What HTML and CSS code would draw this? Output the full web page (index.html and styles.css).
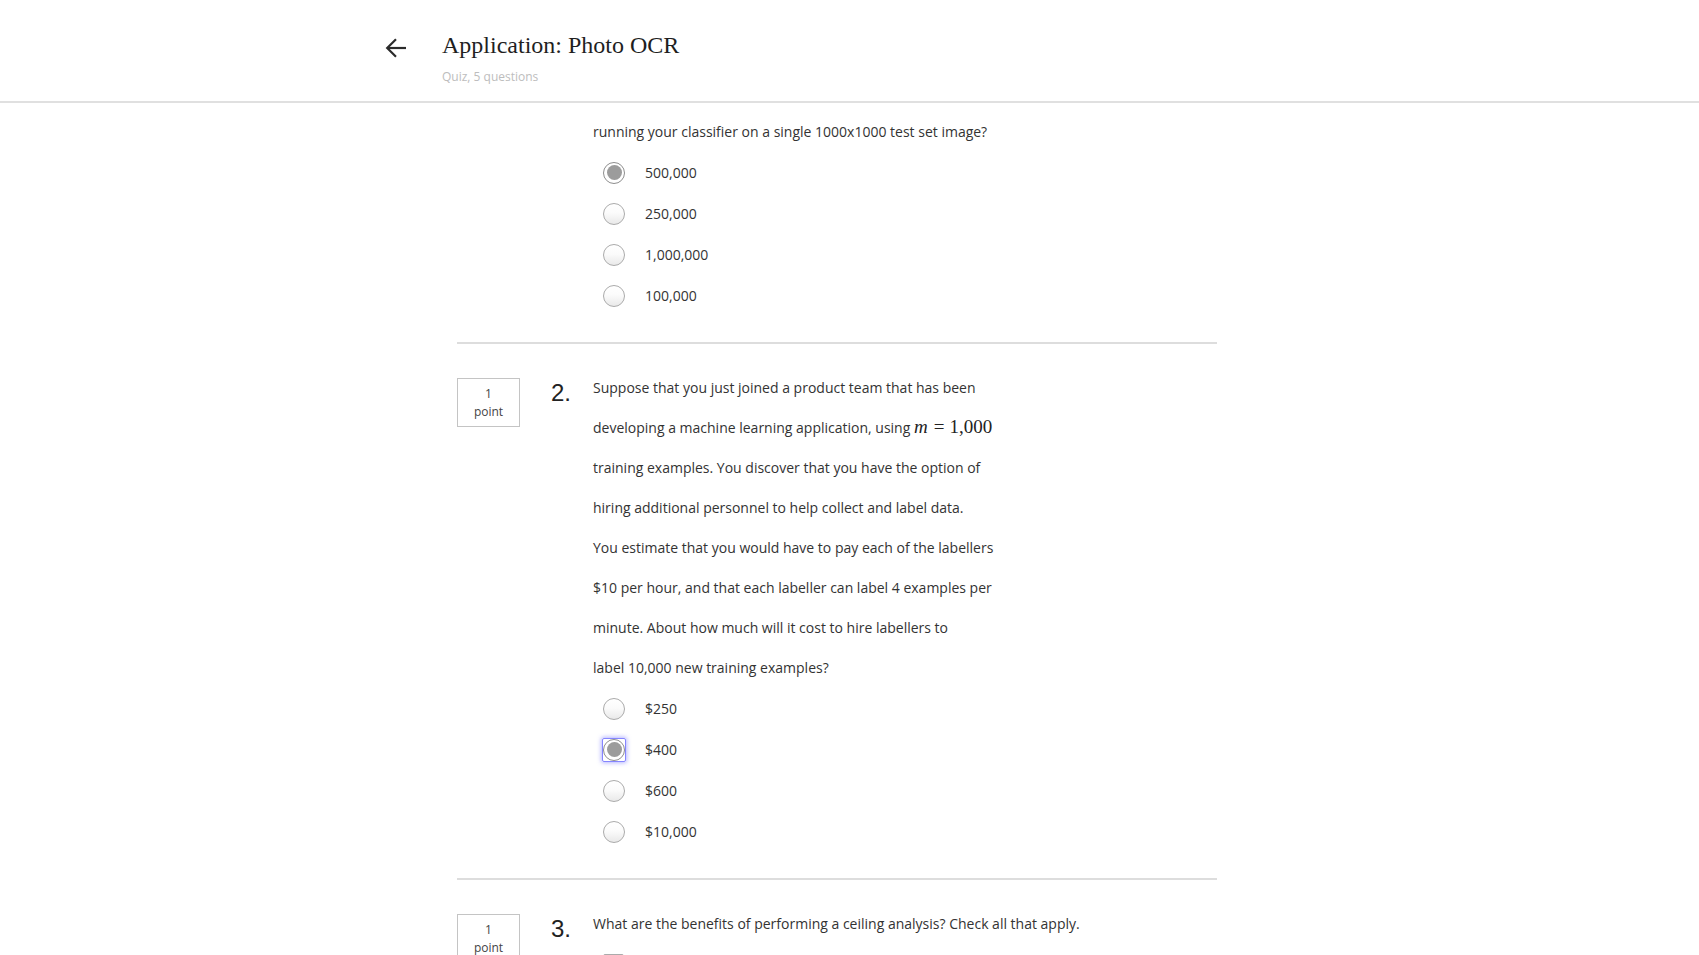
FILE: index.html
```html
<!DOCTYPE html>
<html lang="en">
<head>
<meta charset="utf-8">
<title>Application: Photo OCR</title>
<link rel="stylesheet" href="styles.css">
</head>
<body>
<header class="topbar">
  <div class="topbar-inner">
    <a class="back" href="#" aria-label="Back">
      <svg width="22" height="20" viewBox="0 0 22 20" fill="none" stroke="#2b2b2b" stroke-width="2.2" stroke-linecap="butt" stroke-linejoin="miter">
        <path d="M21 10H2.5"/>
        <path d="M11 1.2L2.2 10l8.8 8.8"/>
      </svg>
    </a>
    <div class="heading">
      <h1 class="title">Application: Photo OCR</h1>
      <div class="subtitle">Quiz, 5 questions</div>
    </div>
  </div>
</header>

<main class="quiz">
  <section class="question">
    <div class="qbody">
      <div class="qtext">
        <span class="line">running your classifier on a single 1000x1000 test set image?</span>
      </div>
      <ul class="options">
        <li class="option"><span class="radio checked"></span><span>500,000</span></li>
        <li class="option"><span class="radio"></span><span>250,000</span></li>
        <li class="option"><span class="radio"></span><span>1,000,000</span></li>
        <li class="option"><span class="radio"></span><span>100,000</span></li>
      </ul>
    </div>
  </section>

  <div class="divider"></div>

  <section class="question">
    <div class="points"><span>1</span><span>point</span></div>
    <div class="qnum">2.</div>
    <div class="qbody">
      <div class="qtext">
        <span class="line">Suppose that you just joined a product team that has been</span>
        <span class="line">developing a machine learning application, using <span class="math"><i>m</i><span class="eq">=</span>1,000</span></span>
        <span class="line">training examples. You discover that you have the option of</span>
        <span class="line">hiring additional personnel to help collect and label data.</span>
        <span class="line">You estimate that you would have to pay each of the labellers</span>
        <span class="line">$10 per hour, and that each labeller can label 4 examples per</span>
        <span class="line">minute. About how much will it cost to hire labellers to</span>
        <span class="line">label 10,000 new training examples?</span>
      </div>
      <ul class="options">
        <li class="option"><span class="radio"></span><span>$250</span></li>
        <li class="option"><span class="radio checked focus"></span><span>$400</span></li>
        <li class="option"><span class="radio"></span><span>$600</span></li>
        <li class="option"><span class="radio"></span><span>$10,000</span></li>
      </ul>
    </div>
  </section>

  <div class="divider"></div>

  <section class="question">
    <div class="points"><span>1</span><span>point</span></div>
    <div class="qnum">3.</div>
    <div class="qbody">
      <div class="qtext">
        <span class="line">What are the benefits of performing a ceiling analysis? Check all that apply.</span>
      </div>
      <ul class="options">
        <li class="option"><span class="checkbox"></span></li>
      </ul>
    </div>
  </section>
</main>
</body>
</html>
```

FILE: styles.css
```css
html, body {
  margin: 0;
  padding: 0;
}

body {
  font-family: "Open Sans", "Liberation Sans", sans-serif;
  color: #333;
  background: #fff;
  height: 955px;
  overflow: hidden;
}

.topbar {
  height: 101px;
  border-bottom: 2px solid #e0e0e0;
  background: #fff;
}

.topbar-inner {
  display: flex;
  align-items: flex-start;
  padding: 31px 0 0 385px;
}

.back {
  display: block;
  width: 22px;
  height: 20px;
  margin-top: 7px;
  margin-right: 35px;
}

.back svg {
  display: block;
}

.title {
  margin: 0;
  font-family: "Liberation Serif", "Times New Roman", serif;
  font-weight: 400;
  font-size: 24px;
  line-height: 28px;
  color: #1f1f1f;
}

.subtitle {
  margin-top: 10px;
  font-size: 12px;
  line-height: 16px;
  color: #bdbdbd;
}

.quiz {
  width: 760px;
  margin-left: 457px;
  padding-top: 9px;
}

.question {
  display: grid;
  grid-template-columns: 94px 42px 1fr;
  align-items: start;
}

.question > .qbody:only-child {
  grid-column: 3;
}

.points {
  grid-column: 1;
  width: 63px;
  height: 49px;
  margin-top: 10px;
  box-sizing: border-box;
  border: 1px solid #c4c4c4;
  display: flex;
  flex-direction: column;
  align-items: center;
  justify-content: center;
  font-size: 12px;
  line-height: 18px;
  color: #444;
}

.qnum {
  grid-column: 2;
  margin-top: 5px;
  font-family: "Liberation Sans", Arial, sans-serif;
  font-size: 24px;
  line-height: 40px;
  color: #222;
}

.qbody {
  grid-column: 3;
}

.qtext {
  font-size: 14px;
  line-height: 40px;
}

.line {
  display: block;
  white-space: nowrap;
}

.math {
  font-family: "Liberation Serif", "Times New Roman", serif;
  font-size: 19px;
  line-height: 1;
  color: #222;
}

.math i {
  font-style: italic;
  margin-right: 5px;
  letter-spacing: 1px;
}

.math .eq {
  margin-right: 5px;
}

.options {
  list-style: none;
  margin: 0;
  padding: 0;
}

.option {
  display: flex;
  align-items: center;
  gap: 20px;
  height: 41px;
  padding-left: 10px;
  font-size: 14px;
}

.radio {
  position: relative;
  flex: none;
  width: 22px;
  height: 22px;
  box-sizing: border-box;
  border-radius: 50%;
  border: 1px solid #ababab;
  background: linear-gradient(180deg, #ffffff 0%, #fbfbfb 45%, #e9e9e9 100%);
}

.radio.checked {
  border-color: #8e8e8e;
  background: #fff;
}

.radio.checked::after {
  content: "";
  position: absolute;
  inset: 2.5px;
  border-radius: 50%;
  background: #9c9c9c;
}

.radio.focus::before {
  content: "";
  position: absolute;
  inset: -2px;
  border: 1px solid #8585ff;
  border-radius: 2px;
  box-shadow: 0 0 4px 1px rgba(120, 120, 255, 0.55);
}

.checkbox {
  flex: none;
  width: 21px;
  height: 21px;
  box-sizing: border-box;
  border: 1px solid #ababab;
  border-radius: 2px;
  background: #fff;
}

.divider {
  height: 2px;
  background: #dddddd;
  margin: 26px 0 24px;
}
```
